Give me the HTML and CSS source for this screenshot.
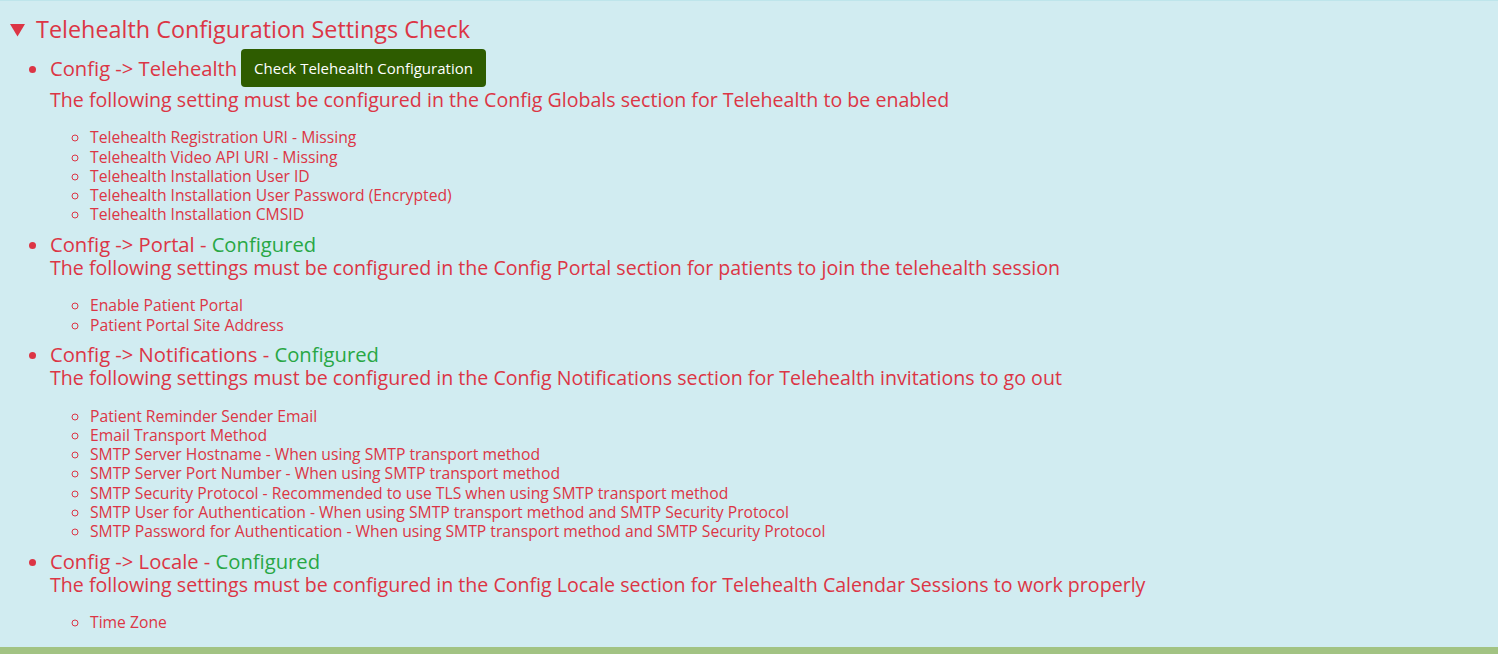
FILE: index.html
```html
<!DOCTYPE html>
<html lang="en">
<head>
<meta charset="utf-8">
<title>Telehealth Configuration Settings Check</title>
<link rel="stylesheet" href="styles.css">
</head>
<body>
<div class="alert">
  <div class="summary">
    <svg class="caret" width="15" height="13" viewBox="0 0 15 13"><polygon points="0,0 15,0 7.5,12.5" fill="#dc3545"/></svg>
    <span>Telehealth Configuration Settings Check</span>
  </div>
  <ul class="sections">
    <li class="section">
      <div class="head-row">
        <span class="head">Config -&gt; Telehealth</span>
        <button class="btn" type="button">Check Telehealth Configuration</button>
      </div>
      <div class="desc">The following setting must be configured in the Config Globals section for Telehealth to be enabled</div>
      <ul class="items">
        <li>Telehealth Registration URI - Missing</li>
        <li>Telehealth Video API URI - Missing</li>
        <li>Telehealth Installation User ID</li>
        <li>Telehealth Installation User Password (Encrypted)</li>
        <li>Telehealth Installation CMSID</li>
      </ul>
    </li>
    <li class="section">
      <div class="head">Config -&gt; Portal - <span class="ok">Configured</span></div>
      <div class="desc">The following settings must be configured in the Config Portal section for patients to join the telehealth session</div>
      <ul class="items">
        <li>Enable Patient Portal</li>
        <li>Patient Portal Site Address</li>
      </ul>
    </li>
    <li class="section">
      <div class="head">Config -&gt; Notifications - <span class="ok">Configured</span></div>
      <div class="desc">The following settings must be configured in the Config Notifications section for Telehealth invitations to go out</div>
      <ul class="items">
        <li>Patient Reminder Sender Email</li>
        <li>Email Transport Method</li>
        <li>SMTP Server Hostname - When using SMTP transport method</li>
        <li>SMTP Server Port Number - When using SMTP transport method</li>
        <li>SMTP Security Protocol - Recommended to use TLS when using SMTP transport method</li>
        <li>SMTP User for Authentication - When using SMTP transport method and SMTP Security Protocol</li>
        <li>SMTP Password for Authentication - When using SMTP transport method and SMTP Security Protocol</li>
      </ul>
    </li>
    <li class="section">
      <div class="head">Config -&gt; Locale - <span class="ok">Configured</span></div>
      <div class="desc">The following settings must be configured in the Config Locale section for Telehealth Calendar Sessions to work properly</div>
      <ul class="items">
        <li>Time Zone</li>
      </ul>
    </li>
  </ul>
</div>
<div class="footer-bar"></div>
</body>
</html>
```
FILE: styles.css
```css
html, body {
  margin: 0;
  padding: 0;
  height: 100%;
}
body {
  font-family: "Open Sans", "Liberation Sans", sans-serif;
  font-weight: 500;
  color: #dc3545;
  background: #a2c383;
  display: flex;
  flex-direction: column;
}
.alert {
  background: #d1ecf1;
  border-top: 1px solid #bee5eb;
  padding: 14px 10px 15px 10px;
}
.footer-bar {
  flex: 1;
  background: #a2c383;
}
.summary {
  display: flex;
  align-items: center;
  gap: 11px;
  font-size: 23.4px;
  line-height: 29px;
}
.caret {
  display: block;
  margin-top: 2px;
}
.sections {
  margin: 5px 0 0;
  padding-left: 40px;
  list-style: disc;
}
.section {
  font-size: 20.2px;
}
.section + .section {
  margin-top: 5.4px;
}
.head-row {
  display: flex;
  align-items: center;
  gap: 4px;
  height: 38px;
  margin-bottom: 1px;
}
.head {
  font-size: 20.2px;
  line-height: 24px;
}
.ok {
  color: #28a745;
}
.btn {
  background: #2e5c00;
  color: #ffffff;
  border: 0;
  border-radius: 4px;
  font-family: "Open Sans", "Liberation Sans", sans-serif;
  font-weight: 500;
  font-size: 15px;
  height: 38px;
  padding: 0 13px;
  margin: 0;
}
.desc {
  font-size: 19.6px;
  line-height: 24px;
}
.items {
  margin: 16.4px 0 0;
  padding-left: 40px;
  list-style: circle;
  font-size: 15.7px;
  line-height: 19.25px;
}
```
